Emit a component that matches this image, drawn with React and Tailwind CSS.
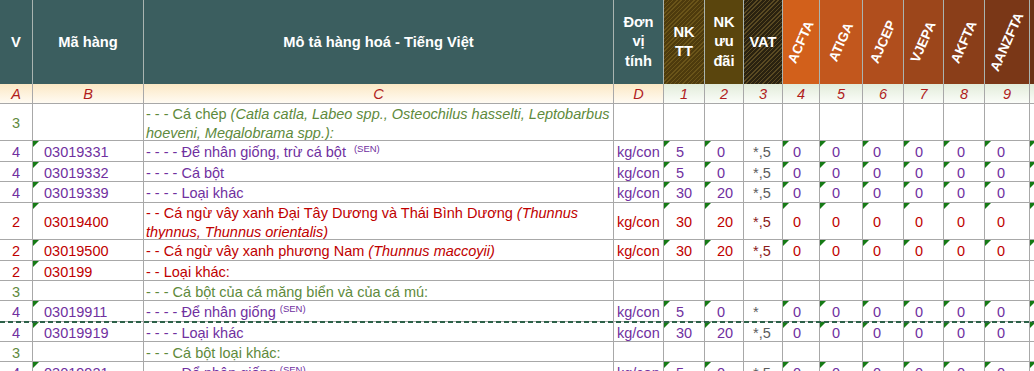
import React from "react";

const GRID =
  "grid grid-cols-[33px_111px_470px_50px_41px_39px_39px_37px_43px_41px_40px_41px_45px_60px] w-[1090px]";

const LV = {
  2: "text-[#c00000]",
  3: "text-[#5e8a3c]",
  4: "text-[#7030a0]",
};

function Tri() {
  return (
    <span className="absolute left-0 top-0 h-0 w-0 border-t-[6px] border-r-[6px] border-t-[#157a15] border-r-transparent" />
  );
}

function Cell({ className = "", tri = false, children }) {
  return (
    <div
      className={
        "relative flex items-center overflow-hidden border-r border-b border-[#a8a8a8] " +
        className
      }
    >
      {tri && <Tri />}
      {children}
    </div>
  );
}

function Sen({ gap = "ml-[4px]" }) {
  return (
    <span className={"relative -top-[5px] inline-block text-[9.5px] leading-none " + gap}>
      (SEN)
    </span>
  );
}

const STD = ["0", "0", "0", "0", "0", "0"];

const rows = [
  {
    lv: 3,
    h: "h-[37px]",
    desc: (
      <div className="leading-[19px]">
        <div className="whitespace-nowrap">
          - - - Cá chép <i>(Catla catla, Labeo spp., Osteochilus hasselti, Leptobarbus</i>
        </div>
        <div className="whitespace-nowrap">
          <i>hoeveni, Megalobrama spp.):</i>
        </div>
      </div>
    ),
  },
  {
    lv: 4,
    h: "h-[21px]",
    code: "03019331",
    desc: (
      <span className="whitespace-nowrap">
        - - - - Để nhân giống, trừ cá bột
        <Sen gap="ml-[8px]" />
      </span>
    ),
    vals: ["5", "0", "*,5", ...STD],
  },
  {
    lv: 4,
    h: "h-[20px]",
    code: "03019332",
    desc: <span className="whitespace-nowrap">- - - - Cá bột</span>,
    vals: ["5", "0", "*,5", ...STD],
  },
  {
    lv: 4,
    h: "h-[21px]",
    code: "03019339",
    desc: <span className="whitespace-nowrap">- - - - Loại khác</span>,
    vals: ["30", "20", "*,5", ...STD],
  },
  {
    lv: 2,
    h: "h-[37px]",
    code: "03019400",
    desc: (
      <div className="leading-[19px]">
        <div className="whitespace-nowrap">
          - - Cá ngừ vây xanh Đại Tây Dương và Thái Bình Dương <i>(Thunnus</i>
        </div>
        <div className="whitespace-nowrap">
          <i>thynnus, Thunnus orientalis)</i>
        </div>
      </div>
    ),
    vals: ["30", "20", "*,5", ...STD],
  },
  {
    lv: 2,
    h: "h-[21px]",
    code: "03019500",
    desc: (
      <span className="whitespace-nowrap">
        - - Cá ngừ vây xanh phương Nam <i>(Thunnus maccoyii)</i>
      </span>
    ),
    vals: ["30", "20", "*,5", ...STD],
  },
  {
    lv: 2,
    h: "h-[20px]",
    code: "030199",
    desc: <span className="whitespace-nowrap">- - Loại khác:</span>,
  },
  {
    lv: 3,
    h: "h-[20px]",
    desc: <span className="whitespace-nowrap">- - - Cá bột của cá măng biển và của cá mú:</span>,
  },
  {
    lv: 4,
    h: "h-[21px]",
    code: "03019911",
    desc: (
      <span className="whitespace-nowrap">
        - - - - Để nhân giống
        <Sen gap="ml-[4px]" />
      </span>
    ),
    vals: ["5", "0", "*", ...STD],
  },
  {
    lv: 4,
    h: "h-[20px]",
    code: "03019919",
    dash: true,
    desc: <span className="whitespace-nowrap">- - - - Loại khác</span>,
    vals: ["30", "20", "*,5", ...STD],
  },
  {
    lv: 3,
    h: "h-[20px]",
    desc: <span className="whitespace-nowrap">- - - Cá bột loại khác:</span>,
  },
  {
    lv: 4,
    h: "h-[20px]",
    code: "03019921",
    desc: (
      <span className="whitespace-nowrap">
        - - - - Để nhân giống
        <Sen gap="ml-[4px]" />
      </span>
    ),
    vals: ["5", "0", "*,5", ...STD],
  },
];

const NUMPAD = [
  "pl-[12px]",
  "pl-[12px]",
  "pl-[9px]",
  "pl-[10px]",
  "pl-[12px]",
  "pl-[10px]",
  "pl-[11px]",
  "pl-[13px]",
  "pl-[12px]",
];

function DataRow({ r }) {
  const col = LV[r.lv];
  const has = !!r.vals;
  const pad = " pt-[4px]";
  return (
    <div className={GRID + " relative " + r.h + " " + col}>
      <Cell className={"justify-center" + pad}>{r.lv}</Cell>
      <Cell tri={!!r.code} className={"pl-[11px]" + pad}>
        {r.code || ""}
      </Cell>
      <Cell className={"pl-[2px]" + pad}>{r.desc}</Cell>
      <Cell className={"pl-[3px]" + pad}>{has ? "kg/con" : ""}</Cell>
      {Array.from({ length: 9 }).map((_, i) => (
        <Cell
          key={i}
          tri={has && i !== 2}
          className={
            NUMPAD[i] +
            pad +
            (i === 2 && r.lv === 4 ? " text-[#5c5c5c]" : "") +
            (i === 2 && r.lv === 2 ? " text-[#8a1a1a]" : "")
          }
        >
          {has ? r.vals[i] : ""}
        </Cell>
      ))}
      <Cell tri={has} />
      {r.dash && (
        <div className="absolute left-0 right-0 -top-[1px] h-[2px] bg-[repeating-linear-gradient(90deg,#2c6148_0px,#2c6148_5px,transparent_5px,transparent_8px)]" />
      )}
    </div>
  );
}

function HCell({ className = "", children }) {
  return (
    <div
      className={
        "flex items-center justify-center border-r border-[#a9b4b0] text-center font-bold text-white " +
        className
      }
    >
      {children}
    </div>
  );
}

function Rot({ children }) {
  return (
    <span className="inline-block -rotate-[66deg] whitespace-nowrap text-[13.5px] font-bold text-white">
      {children}
    </span>
  );
}

export default function App() {
  const idx = ["A", "B", "C", "D", "1", "2", "3", "4", "5", "6", "7", "8", "9", ""];
  return (
    <div
      className="h-[371px] w-[1034px] overflow-hidden bg-white text-[14.5px]"
      style={{ fontFamily: '"Liberation Sans", Arial, sans-serif' }}
    >
      {/* header */}
      <div className={GRID + " h-[84px] text-[14.7px]"}>
        <HCell className="bg-[#3b5e5f]">V</HCell>
        <HCell className="bg-[#3b5e5f]">Mã hàng</HCell>
        <HCell className="bg-[#3b5e5f]">Mô tả hàng hoá - Tiếng Việt</HCell>
        <HCell className="bg-[#3b5e5f] leading-[19.5px]">
          <div>
            Đơn
            <br />
            vị
            <br />
            tính
          </div>
        </HCell>
        <HCell className="bg-[repeating-linear-gradient(135deg,#6a5419_0px,#6a5419_1px,#4e3b0d_1px,#4e3b0d_3px)] leading-[19px]">
          <div>
            NK
            <br />
            TT
          </div>
        </HCell>
        <HCell className="bg-[#5a450d] leading-[19.5px]">
          <div>
            NK
            <br />
            ưu
            <br />
            đãi
          </div>
        </HCell>
        <HCell className="bg-[repeating-linear-gradient(135deg,#5a4a22_0px,#5a4a22_1px,#2a2210_1px,#2a2210_3px)]">
          VAT
        </HCell>
        <HCell className="bg-[#d2601b]">
          <Rot>ACFTA</Rot>
        </HCell>
        <HCell className="bg-[#c2571d]">
          <Rot>ATIGA</Rot>
        </HCell>
        <HCell className="bg-[#b04e1d]">
          <Rot>AJCEP</Rot>
        </HCell>
        <HCell className="bg-[#9c461b]">
          <Rot>VJEPA</Rot>
        </HCell>
        <HCell className="bg-[#8a3e19]">
          <Rot>AKFTA</Rot>
        </HCell>
        <HCell className="bg-[#7a3717]">
          <Rot>AANZFTA</Rot>
        </HCell>
        <HCell className="bg-[#6b3116]" />
      </div>

      {/* index row */}
      <div className={GRID + " h-[20px] italic text-[#b01c1c]"}>
        {idx.map((t, i) => (
          <Cell
            key={i}
            className={
              "justify-center pt-[3px] " +
              (i < 4
                ? "bg-linear-to-b from-[#fbe8c4] to-[#fffbf3]"
                : "bg-linear-to-b from-[#e2ecda] to-[#fbfdf9]")
            }
          >
            {t}
          </Cell>
        ))}
      </div>

      {rows.map((r, i) => (
        <DataRow key={i} r={r} />
      ))}
    </div>
  );
}
